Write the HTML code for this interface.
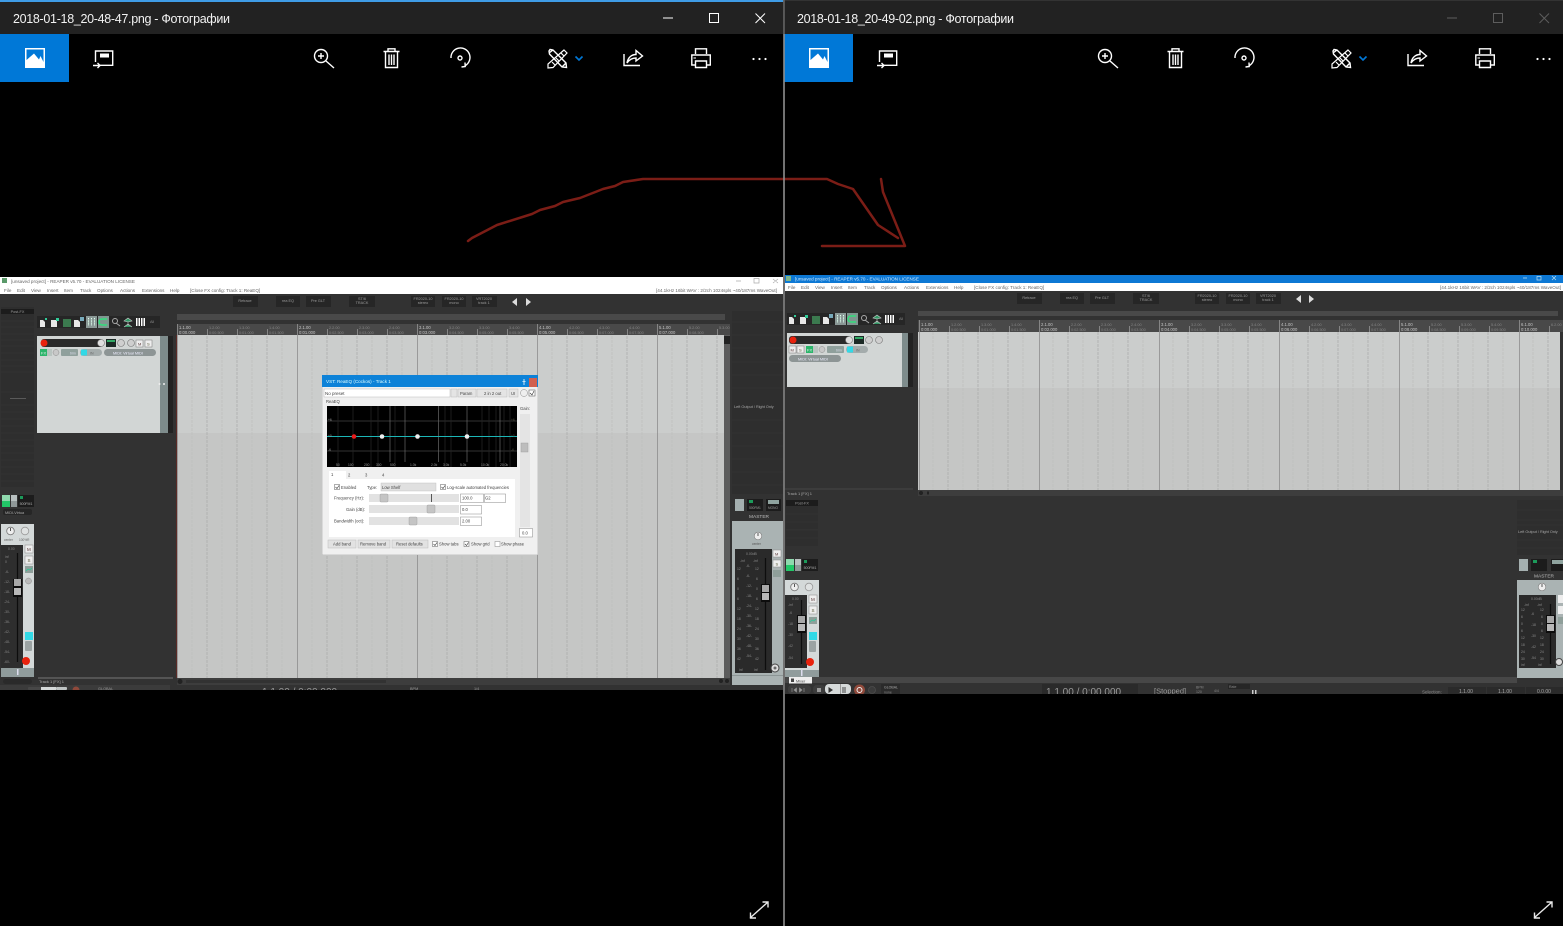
<!DOCTYPE html>
<html><head><meta charset="utf-8"><title>Фотографии</title>
<style>
html,body{margin:0;padding:0;background:#000;overflow:hidden}
svg{display:block;position:absolute;left:0;top:0}
text{font-family:"Liberation Sans","Noto Sans CJK SC",sans-serif}
</style></head>
<body>
<svg width="1563" height="926" viewBox="0 0 1563 926" xmlns="http://www.w3.org/2000/svg">
<defs>
<filter id="b" x="0" y="0" width="100%" height="100%"><feGaussianBlur stdDeviation="0.3"/></filter>
<pattern id="grid" x="177" y="0" width="120" height="4" patternUnits="userSpaceOnUse">
<path d="M15 0V4M45 0V4M75 0V4M105 0V4" stroke="#bdbfbe" stroke-width=".8" stroke-dasharray="3 1"/>
<path d="M30 0V4M60 0V4M90 0V4" stroke="#acadac" stroke-width=".8" stroke-dasharray="3 1"/>
<path d="M0.5 0V4" stroke="#949494" stroke-width=".9"/>
</pattern>
<pattern id="grid2" x="918" y="0" width="120" height="4" patternUnits="userSpaceOnUse">
<path d="M15 0V4M45 0V4M75 0V4M105 0V4" stroke="#bdbfbe" stroke-width=".8" stroke-dasharray="3 1"/>
<path d="M30 0V4M60 0V4M90 0V4" stroke="#acadac" stroke-width=".8" stroke-dasharray="3 1"/>
<path d="M1.5 0V4" stroke="#949494" stroke-width=".9"/>
</pattern>
<g id="toolbar" fill="none" stroke="#fff" stroke-width="1.400">
<rect x="0" y="34" width="69" height="48" fill="#0078d7" stroke="none"/>
<rect x="25" y="48" width="20" height="20" fill="#fff" stroke="none"/>
<path d="M26.500 49.500H43.500V62L40.500 56 39 59.500 34 53.500 26.500 60Z" fill="#0078d7" stroke="none"/>
<path d="M95.500 62V51H112.700V65.300H99.500"/>
<rect x="100" y="53.500" width="9" height="4" fill="#fff" stroke="none"/>
<path d="M93 65.500H100M97.500 63L100 65.500 97.500 68"/>
<circle cx="321" cy="56" r="6.500"/>
<path d="M318 56H324M321 53V59M326 61L334 68"/>
<path d="M383.500 51.500H399.500M388 51V48.800H395V51M385.500 52V67.500H397.500V52M389 54.500V65M391.500 54.500V65M394 54.500V65"/>
<path d="M451 58A9.500 9.500 0 1 1 465.500 65.500M465 62.500L465.200 66.500 461.500 67"/>
<circle cx="460" cy="58" r="2"/>
<path d="M550 49.500L553 50 566 63 566.500 67.500 562 67 549.500 54 549 51ZM549 53L553 50M562 67L566 63"/>
<path d="M564 50L567 53 553 67.500 548 68 548 64ZM561 53L564 56M556 58L559 61M552 62L555 65" stroke-width="1.200"/>
<path d="M575.500 56.500L579 60 582.500 56.500" stroke="#0078d7" stroke-width="1.600"/>
<path d="M624 54V65.500H640"/>
<path d="M627 63C628 57 632 54.500 636 54.500V50.500L642.500 56 636 61V58C632 58 629 60 627 63Z"/>
<path d="M695.500 54V48.800H706.500V54M695.500 65H691.800V55H710.300V65H706.500M695.500 61H706.500V67.500H695.500Z"/>
<path d="M693.500 58H696" stroke-width="1"/>
<circle cx="753.500" cy="59" r="1.100" fill="#fff" stroke="none"/>
<circle cx="759.500" cy="59" r="1.100" fill="#fff" stroke="none"/>
<circle cx="765.500" cy="59" r="1.100" fill="#fff" stroke="none"/>
<path d="M750 918L768 902M750.500 912.500V918H756M762.500 902H768V907.500" stroke="#e8e8e8"/>
</g>
</defs>
<rect width="1563" height="926" fill="#000"/>

<!-- Left window chrome -->
<rect x="0" y="0" width="784" height="34" fill="#222"/>
<rect x="0" y="0" width="784" height="2" fill="#3f9ce6"/>
<text x="13" y="23" font-size="12.500" fill="#f2f2f2" textLength="217" lengthAdjust="spacing">2018-01-18_20-48-47.png - Фотографии</text>
<path d="M663 18H673" stroke="#fff" fill="none"/>
<rect x="709.500" y="13.500" width="9" height="9" fill="none" stroke="#fff"/>
<path d="M755.500 13.500L765 23M765 13.500L755.500 23" stroke="#fff" fill="none"/>
<use href="#toolbar"/>

<!-- Right window chrome -->
<rect x="785" y="0" width="778" height="34" fill="#222"/>
<rect x="785" y="0" width="778" height="1" fill="#333"/>
<text x="797" y="23" font-size="12.500" fill="#f2f2f2" textLength="217" lengthAdjust="spacing">2018-01-18_20-49-02.png - Фотографии</text>
<path d="M1447 18H1457" stroke="#5d5d5d" fill="none"/>
<rect x="1493.500" y="13.500" width="9" height="9" fill="none" stroke="#5d5d5d"/>
<path d="M1539.500 13.500L1549 23M1549 13.500L1539.500 23" stroke="#5d5d5d" fill="none"/>
<use href="#toolbar" x="784"/>

<!-- Left Reaper -->
<g filter="url(#b)">
<rect x="0" y="277" width="783" height="413" fill="#333"/>
<rect x="0" y="277" width="783" height="17" fill="#fff"/>
<rect x="2" y="278" width="5" height="5" fill="#5a9a6a"/>
<g font-size="4.600" fill="#666">
<text x="11" y="283">[unsaved project] - REAPER v5.70 - EVALUATION LICENSE</text>
<text x="4" y="292">File</text><text x="17" y="292">Edit</text><text x="31" y="292">View</text><text x="47" y="292">Insert</text><text x="64" y="292">Item</text><text x="80" y="292">Track</text><text x="97" y="292">Options</text><text x="120" y="292">Actions</text><text x="142" y="292">Extensions</text><text x="170" y="292">Help</text>
<text x="190" y="292">[Close FX config: Track 1: ReaEQ]</text>
<text x="656" y="292">[44.1kHz 16bit WAV : 2/2ch 1024spls ~40/187ms WaveOut]</text>
</g>
<path d="M736 281H741M754 278.500H759V283H754ZM773 279L778 283M778 279L773 283" stroke="#aaa" fill="none" stroke-width=".7"/>

<g fill="#282828">
<rect x="233" y="296" width="25" height="11"/><rect x="276" y="296" width="24" height="11"/><rect x="306" y="296" width="25" height="11"/><rect x="349" y="296" width="26" height="11"/><rect x="411" y="296" width="24" height="11"/><rect x="442" y="296" width="24" height="11"/><rect x="472" y="296" width="25" height="11"/>
</g>
<g font-size="3.800" fill="#999" text-anchor="middle">
<text x="245" y="302">Retrace</text><text x="288" y="302">rea EQ</text><text x="318" y="302">Pre GLT</text><text x="362" y="300">ST/6</text><text x="362" y="304">TRACK</text><text x="423" y="300">FR2020-10</text><text x="423" y="304">stereo</text><text x="454" y="300">FR2020-10</text><text x="454" y="304">mono</text><text x="484" y="300">VRT2020</text><text x="484" y="304">track 1</text>
</g>
<path d="M517 298L512 302 517 306ZM526 298L531 302 526 306Z" fill="#ddd"/>

<!-- left FX column -->
<rect x="1" y="307" width="33" height="180" fill="#2d2d2d"/>
<rect x="1" y="309" width="33" height="5" fill="#1f1f1f"/>
<text x="17.500" y="313" font-size="3.800" fill="#999" text-anchor="middle">Post-FX</text>
<path d="M1 321H34M1 327H34M1 334H34M1 340H34M1 346H34M1 353H34M1 360H34M1 366H34M1 372H34M1 392H34M1 405H34M1 412H34M1 419H34M1 426H34M1 433H34M1 440H34M1 446H34M1 453H34M1 460H34M1 467H34M1 474H34M1 481H34" stroke="#313131" stroke-width="1"/>
<rect x="10" y="398" width="16" height="1" fill="#5a5a5a"/>
<rect x="2" y="495" width="8" height="6" fill="#8fd9ae"/><rect x="2" y="501" width="8" height="6" fill="#22c868"/>
<rect x="11" y="495" width="6" height="6" fill="#b8c0c0"/><rect x="11" y="501" width="6" height="6" fill="#8f9898"/>
<rect x="18" y="495" width="16" height="12" fill="#1f1f1f"/>
<rect x="20" y="496" width="3" height="3" fill="#1f9a5a"/>
<text x="26" y="505" font-size="3.500" fill="#aaa" text-anchor="middle">500FM1</text>
<rect x="3" y="509" width="29" height="6" rx="2" fill="#262626"/>
<text x="5" y="514" font-size="3.800" fill="#aaa">MIDI-Virtua</text>

<!-- left mixer strip -->
<rect x="1" y="524" width="33" height="144" fill="#d4d9d9"/>
<circle cx="10.500" cy="531" r="3.800" fill="#eee" stroke="#777" stroke-width=".8"/><path d="M10.500 528V531" stroke="#555"/>
<circle cx="25" cy="531" r="3.800" fill="#dfe2e2" stroke="#999" stroke-width=".8"/>
<text x="4" y="541" font-size="3.200" fill="#666">center</text><text x="19" y="541" font-size="3.200" fill="#666">100%R</text>
<rect x="1" y="545" width="22" height="123" fill="#2d2d2d"/>
<path d="M17.500 553V662" stroke="#0f0f0f" stroke-width="1.200"/>
<rect x="13" y="579" width="9" height="18" fill="#111"/>
<rect x="14" y="579" width="7" height="7" fill="#a8a8a8"/><rect x="14" y="588" width="7" height="7" fill="#b8b8b8"/>
<g font-size="3.400" fill="#888">
<text x="8" y="550">0.00</text><text x="5" y="558">inf</text><text x="5" y="563">0</text><text x="5" y="573">-6-</text><text x="4" y="583">-12-</text><text x="4" y="593">-18-</text><text x="4" y="603">-24-</text><text x="4" y="613">-30-</text><text x="4" y="623">-36-</text><text x="4" y="633">-42-</text><text x="4" y="643">-48-</text><text x="4" y="653">-54-</text><text x="4" y="663">-60-</text>
</g>
<rect x="25" y="545" width="8" height="8" fill="#eee" stroke="#888" stroke-width=".5"/><text x="27" y="551" font-size="4.500" fill="#533">M</text>
<rect x="25" y="556" width="8" height="8" fill="#eee" stroke="#888" stroke-width=".5"/><text x="27.500" y="562" font-size="4.500" fill="#553">S</text>
<rect x="25" y="566" width="8" height="7" fill="#8f9f9a"/><path d="M26 571L28 569 30 570 32 568" stroke="#2c9" fill="none" stroke-width=".7"/>
<circle cx="28.500" cy="581" r="3" fill="#bbb" stroke="#888" stroke-width=".5"/>
<rect x="25" y="632" width="8" height="8" fill="#33d9e6"/>
<rect x="25" y="641" width="7" height="10" rx="1" fill="#9ba3a3"/>
<circle cx="26" cy="661" r="4" fill="#e8200c"/>
<rect x="1" y="668" width="33" height="9" fill="#909c9c"/>
<rect x="17" y="669" width="1.500" height="6" fill="#dde"/>
<rect x="3" y="679" width="29" height="5" rx="2.500" fill="#2a2a2a"/>
<rect x="0" y="685" width="170" height="5" fill="#3a3a3a"/>
<rect x="38" y="677.500" width="135" height="1" fill="#777"/>
<text x="39" y="683" font-size="4" fill="#aaa">Track 1 [FX] 1</text>
<rect x="28" y="687" width="39" height="3" rx="1" fill="#474747"/>
<rect x="41" y="687" width="15" height="3" fill="#d5d9d9"/><rect x="56" y="687" width="11" height="3" rx="1" fill="#bfc4c4"/>
<circle cx="76" cy="690" r="3.500" fill="#8f4a3a"/>
<text x="98" y="690" font-size="3.800" fill="#999">GLOBAL</text>
<text x="262" y="695" font-size="10" fill="#999">1.1.00 / 0:00.000</text>
<text x="410" y="690" font-size="3.800" fill="#999">BPM</text><text x="474" y="690" font-size="3.800" fill="#999">1/4</text>

<!-- left toolbar -->
<rect x="37" y="316" width="123" height="12" fill="#262626"/>
<g fill="#e8e8e8">
<path d="M40 320H43L45 322V327H40Z"/><path d="M51 320H57V327H51Z"/><rect x="63" y="319" width="8" height="8" fill="#3a7a4f"/><path d="M74 320H78L80 322V327H74Z"/>
</g>
<rect x="45" y="318" width="2" height="2" fill="#3c9"/><rect x="56" y="318" width="3" height="3" fill="#3c9"/><rect x="80" y="317" width="4" height="4" fill="#7ab"/>
<rect x="86" y="316" width="11" height="12" fill="#8a9896"/><path d="M88.500 318V326M91.500 318V326M94.500 318V326" stroke="#dfe" stroke-dasharray="1 .6"/>
<rect x="98" y="316" width="11" height="12" fill="#7f9690"/><path d="M107 319H102A3 3 0 0 0 102 325H107" stroke="#2e7" fill="none" stroke-width="1.200"/>
<circle cx="115" cy="321" r="2.500" fill="none" stroke="#aaa"/><path d="M116 323L120 326" stroke="#aaa"/>
<path d="M124 321L128 318 132 321 128 322ZM128 322V326M124 327L128 324 132 327" stroke="#ccc" fill="#396" stroke-width=".6"/>
<rect x="136" y="318" width="9" height="8" fill="#fff"/><path d="M138 318V326M140.500 318V326M143 318V326" stroke="#222"/>
<text x="150" y="323" font-size="3.800" fill="#888">All</text>

<!-- left TCP -->
<rect x="37" y="336" width="123" height="97" fill="#d2d6d5"/>
<rect x="160" y="336" width="8" height="97" fill="#7e8c8c"/>
<rect x="168" y="336" width="5" height="97" fill="#232323"/>
<circle cx="159.500" cy="384" r="1" fill="#eee"/><circle cx="164" cy="384" r="1" fill="#eee"/>
<rect x="41" y="339" width="62" height="8" rx="3" fill="#2a2a2a"/>
<circle cx="44" cy="343" r="3.500" fill="#e8200c"/>
<circle cx="101" cy="343" r="3.500" fill="#dfdfdf" stroke="#777" stroke-width=".6"/>
<rect x="106" y="339" width="10" height="8" fill="#1f2a28"/><rect x="107" y="340" width="8" height="2" fill="#3a6"/>
<circle cx="121" cy="343" r="3.500" fill="#cfcfcf" stroke="#777" stroke-width=".6"/><circle cx="131" cy="343" r="3.500" fill="#cfcfcf" stroke="#777" stroke-width=".6"/>
<rect x="136" y="340" width="7" height="7" fill="#eee" stroke="#777" stroke-width=".5"/><rect x="145" y="340" width="7" height="7" fill="#eee" stroke="#777" stroke-width=".5"/>
<text x="138" y="345.500" font-size="4" fill="#533">M</text><text x="147" y="345.500" font-size="4" fill="#553">S</text>
<rect x="40" y="349" width="11" height="7" fill="#2bb56a"/><rect x="47" y="349" width="5" height="7" fill="#b9c4c0"/>
<text x="41" y="354.500" font-size="4" fill="#eee">FX</text>
<circle cx="56" cy="352.500" r="3" fill="#c8c8c8" stroke="#888" stroke-width=".5"/>
<rect x="61" y="349" width="17" height="7" rx="1" fill="#8fa09c"/>
<text x="70" y="354.500" font-size="3.500" fill="#dde">trim</text>
<rect x="80" y="349" width="22" height="7" rx="3.500" fill="#a4acac"/><rect x="81" y="349.500" width="6" height="6" fill="#33d9e6"/>
<text x="90" y="354.500" font-size="3.500" fill="#666">IN</text>
<rect x="104" y="349" width="52" height="7" rx="3.500" fill="#8d9595"/>
<text x="113" y="354.500" font-size="3.800" fill="#eef">MIDI: Virtual MIDI</text>

<!-- left ruler/arrange -->
<rect x="177" y="314" width="548" height="6" fill="#4a4a4a"/>
<rect x="177" y="324" width="553" height="11" fill="#4a4a4a"/>
<rect x="177" y="335" width="547" height="98" fill="#cbcdcc"/>
<rect x="177" y="433" width="547" height="245" fill="#c5c6c5"/>
<rect x="177" y="335" width="547" height="343" fill="url(#grid)"/>
<rect x="176" y="335" width="1" height="343" fill="#5a2a26"/>
<rect x="724" y="335" width="6" height="343" fill="#5b5b5b"/>
<rect x="724" y="336" width="6" height="8" fill="#222"/>
<rect x="177" y="678" width="553" height="7" fill="#3c3c3c"/>
<rect x="186" y="680" width="200" height="3" fill="#303030"/>
<circle cx="180" cy="681.500" r="2.500" fill="#222"/>
<circle cx="727" cy="681" r="2" fill="#222"/><circle cx="721" cy="681" r="2" fill="#222"/>
<g stroke="#858585" stroke-width="1">
<path d="M177.500 324V335M207.500 329V335M237.500 329V335M267.500 329V335M297.500 324V335M327.500 329V335M357.500 329V335M387.500 329V335M417.500 324V335M447.500 329V335M477.500 329V335M507.500 329V335M537.500 324V335M567.500 329V335M597.500 329V335M627.500 329V335M657.500 324V335M687.500 329V335M717.500 329V335"/>
</g>
<g font-size="4.200" fill="#c4c4c4">
<text x="179" y="329">1.1.00</text><text x="299" y="329">2.1.00</text><text x="419" y="329">3.1.00</text><text x="539" y="329">4.1.00</text><text x="659" y="329">5.1.00</text>
<text x="179" y="334">0:00.000</text><text x="299" y="334">0:01.000</text><text x="419" y="334">0:03.000</text><text x="539" y="334">0:05.000</text><text x="659" y="334">0:07.000</text>
</g>
<g font-size="3.800" fill="#858585">
<text x="209" y="329">1.2.00</text><text x="239" y="329">1.3.00</text><text x="269" y="329">1.4.00</text><text x="329" y="329">2.2.00</text><text x="359" y="329">2.3.00</text><text x="389" y="329">2.4.00</text><text x="449" y="329">3.2.00</text><text x="479" y="329">3.3.00</text><text x="509" y="329">3.4.00</text><text x="569" y="329">4.2.00</text><text x="599" y="329">4.3.00</text><text x="629" y="329">4.4.00</text><text x="689" y="329">5.2.00</text><text x="719" y="329">5.3.00</text>
<text x="209" y="334">0:00.500</text><text x="239" y="334">0:01.000</text><text x="269" y="334">0:01.500</text><text x="329" y="334">0:02.500</text><text x="359" y="334">0:03.000</text><text x="389" y="334">0:03.500</text><text x="449" y="334">0:04.500</text><text x="479" y="334">0:05.000</text><text x="509" y="334">0:05.500</text><text x="569" y="334">0:06.500</text><text x="599" y="334">0:07.000</text><text x="629" y="334">0:07.500</text><text x="689" y="334">0:08.500</text>
</g>

<!-- left master column -->
<rect x="732" y="311" width="51" height="183" fill="#2d2d2d"/>
<path d="M732 322H783M732 335H783M732 348H783M732 362H783M732 375H783M732 388H783M732 420H783M732 433H783M732 446H783M732 459H783M732 472H783M732 485H783" stroke="#323232"/>
<text x="734" y="408" font-size="3.800" fill="#aaa">Left Output / Right Only</text>
<rect x="735" y="499" width="9" height="12" fill="#a5b0b0"/><rect x="747" y="499" width="16" height="12" fill="#1f1f1f"/><rect x="749" y="500" width="4" height="3" fill="#1f9a5a"/>
<rect x="766" y="499" width="15" height="12" fill="#1f1f1f"/><rect x="768" y="500" width="11" height="4" fill="#8fa39f"/>
<text x="755" y="509" font-size="3.200" fill="#999" text-anchor="middle">500FM1</text><text x="773" y="509" font-size="3.200" fill="#999" text-anchor="middle">MONO</text>
<text x="749" y="518" font-size="4.800" fill="#bbb">MASTER</text>
<rect x="732" y="521" width="51" height="164" fill="#aab3b3"/>
<circle cx="758" cy="536" r="3.800" fill="#eee" stroke="#777" stroke-width=".6"/><path d="M758 533V536" stroke="#555"/>
<text x="752" y="545" font-size="3.200" fill="#555">center</text>
<rect x="735" y="549" width="37" height="124" fill="#2b2b2b"/>
<path d="M765.500 558V670" stroke="#0f0f0f" stroke-width="1.200"/>
<rect x="761" y="584" width="9" height="18" fill="#111"/><rect x="762" y="585" width="7" height="7" fill="#a8a8a8"/><rect x="762" y="593" width="7" height="7" fill="#b8b8b8"/>
<g font-size="3.400" fill="#8a8a8a">
<text x="746" y="555">0.00dB</text><text x="740" y="562">-inf</text><text x="753" y="562">-inf</text>
<text x="737" y="570">12</text><text x="737" y="580">6</text><text x="737" y="590">0</text><text x="737" y="600">6</text><text x="737" y="610">12</text><text x="737" y="620">18</text><text x="737" y="630">24</text><text x="737" y="640">30</text><text x="737" y="650">36</text><text x="737" y="660">42</text><text x="739" y="671">inf</text>
<text x="746" y="567">-6-</text><text x="746" y="577">-6-</text><text x="746" y="587">-12-</text><text x="746" y="597">-18-</text><text x="746" y="607">-24-</text><text x="746" y="617">-30-</text><text x="746" y="627">-36-</text><text x="746" y="637">-42-</text><text x="746" y="647">-48-</text><text x="746" y="657">-54-</text>
<text x="755" y="570">12</text><text x="756" y="580">6</text><text x="756" y="590">0</text><text x="756" y="600">6</text><text x="755" y="610">12</text><text x="755" y="620">18</text><text x="755" y="630">24</text><text x="755" y="640">30</text><text x="755" y="650">36</text><text x="755" y="660">42</text><text x="754" y="671">inf</text>
</g>
<rect x="773" y="550" width="8" height="7" fill="#eee" stroke="#888" stroke-width=".5"/><text x="775" y="555.500" font-size="4" fill="#533">M</text>
<rect x="773" y="560" width="8" height="7" fill="#eee" stroke="#888" stroke-width=".5"/><text x="775.500" y="565.500" font-size="4" fill="#553">S</text>
<rect x="773" y="570" width="8" height="7" fill="#8f9f9a"/>
<circle cx="775" cy="668" r="4" fill="#ddd" stroke="#444"/><circle cx="775" cy="668" r="1.500" fill="#666"/>
<rect x="732" y="675" width="51" height="1" fill="#8d9696"/>
</g>
<rect x="0" y="690" width="783" height="10" fill="#000"/>

<!-- FX window -->
<g filter="url(#b)">
<rect x="322" y="375" width="216" height="180" fill="#f0f0f0"/>
<rect x="322" y="375" width="216" height="180" fill="none" stroke="#999" stroke-width=".5"/>
<rect x="322" y="375" width="216" height="12" fill="#0f82d8"/>
<text x="326" y="383" font-size="4.600" fill="#dff">VST: ReaEQ (Cockos) - Track 1</text>
<path d="M524 379V381M522.500 381.500H525.500M524 382V385" stroke="#fff" stroke-width=".8"/>
<rect x="529" y="378" width="8" height="9" fill="#d2604f"/>
<rect x="324" y="389" width="126" height="8" fill="#fff" stroke="#bbb" stroke-width=".5"/>
<text x="325" y="395" font-size="4.500" fill="#444">No preset</text>
<g fill="#e4e4e4" stroke="#bbb" stroke-width=".5">
<rect x="451" y="389" width="6" height="8"/><rect x="458" y="389" width="18" height="8"/><rect x="477" y="389" width="30" height="8"/><rect x="509" y="389" width="9" height="8"/>
</g>
<g font-size="4.200" fill="#444">
<text x="460" y="395">Param</text><text x="484" y="395">2 in 2 out</text><text x="511" y="395">UI</text>
<text x="326" y="403">ReaEQ</text><text x="520" y="410">Gain:</text>
</g>
<circle cx="524" cy="393" r="3.500" fill="#eee" stroke="#888" stroke-width=".5"/>
<rect x="529" y="390" width="6" height="6" fill="#fff" stroke="#666" stroke-width=".6"/><path d="M530 393L532 395 534 391" stroke="#333" stroke-width=".6" fill="none"/>
<rect x="327" y="406" width="190" height="61" fill="#000"/>
<path d="M327 421H517M327 451H517" stroke="#404040" stroke-width=".7"/>
<path d="M338 406V467M353 406V467M371 406V467M378 406V467M395 406V467M445 406V467M451 406V467M482 406V467M489 406V467M496 406V467M504 406V467M510 406V467" stroke="#262626" stroke-width=".7"/>
<path d="M390 406V462M405 406V462M438.500 406V462M467 406V462M500 406V462" stroke="#6a6a6a" stroke-width=".7"/>
<path d="M327 436.500H517" stroke="#1fb6b6" stroke-width="1"/>
<circle cx="354" cy="436.500" r="2.300" fill="#e81c1c"/>
<circle cx="382" cy="436.500" r="2.300" fill="#eee"/>
<circle cx="417.500" cy="436.500" r="2.300" fill="#eee"/>
<circle cx="467" cy="436.500" r="2.300" fill="#eee"/>
<g font-size="3.300" fill="#999">
<text x="336" y="466">50</text><text x="348" y="466">100</text><text x="364" y="466">200</text><text x="376" y="466">300</text><text x="390" y="466">500</text><text x="410" y="466">1.0k</text><text x="431" y="466">2.0k</text><text x="443" y="466">3.0k</text><text x="460" y="466">5.0k</text><text x="481" y="466">10.0k</text><text x="500" y="466">20.0k</text>
<text x="328" y="421">+6</text><text x="328" y="437">+0</text><text x="328" y="451">-6</text>
<text x="511" y="421" fill="#554">+6</text><text x="511" y="437" fill="#554">+0</text><text x="511" y="451" fill="#554">-6</text>
</g>
<rect x="329" y="471" width="17" height="8" fill="#fff"/>
<rect x="329" y="479" width="186" height="58" fill="#fff"/>
<rect x="381" y="483" width="55" height="8" fill="#e0e0e0" stroke="#bbb" stroke-width=".4"/>
<g fill="#fff" stroke="#777" stroke-width=".6">
<rect x="334.500" y="484.500" width="5" height="5"/><rect x="440.500" y="484.500" width="5" height="5"/><rect x="432.500" y="541.500" width="5" height="5"/><rect x="464" y="541.500" width="5" height="5"/><rect x="495" y="541.500" width="5" height="5" stroke="#999"/>
</g>
<path d="M335.500 487L337 488.500 339 485.500M441.500 487L443 488.500 445 485.500M433.500 544L435 545.500 437 542.500M465 544L466.500 545.500 468.500 542.500" stroke="#333" stroke-width=".6" fill="none"/>
<g fill="#e2e2e2">
<rect x="369" y="494" width="90" height="8"/><rect x="369" y="505" width="90" height="8"/><rect x="369" y="517" width="90" height="8"/>
</g>
<path d="M431.500 494V502" stroke="#333" stroke-width=".8"/>
<g fill="#c4c4c4" stroke="#999" stroke-width=".4">
<rect x="380" y="494" width="8" height="8" rx="1"/><rect x="427" y="505" width="8" height="8" rx="1"/><rect x="409" y="517" width="8" height="8" rx="1"/>
</g>
<g fill="#fff" stroke="#888" stroke-width=".5">
<rect x="460.500" y="494" width="23" height="8.500"/><rect x="484.500" y="494" width="21" height="8.500"/><rect x="460.500" y="505.500" width="21" height="8.500"/><rect x="460.500" y="517" width="21" height="8.500"/><rect x="519.500" y="528.500" width="13" height="8.500"/>
</g>
<rect x="520" y="414" width="10" height="113" fill="#e4e4e4"/>
<rect x="521" y="443" width="7" height="9" fill="#bdbdbd" stroke="#999" stroke-width=".4"/>
<g fill="#e2e2e2" stroke="#bbb" stroke-width=".5">
<rect x="328" y="540" width="28" height="8"/><rect x="358" y="540" width="32" height="8"/><rect x="392" y="540" width="36" height="8"/>
</g>
<g font-size="4.200" fill="#444">
<text x="331" y="476">1</text><text x="348" y="476.500">2</text><text x="365" y="476.500">3</text><text x="382" y="476.500">4</text>
<text x="341" y="489">Enabled</text><text x="367" y="489">Type:</text><text x="382" y="489">Low Shelf</text>
<text x="447" y="489">Log-scale automated frequencies</text>
<text x="334" y="499.500">Frequency (Hz):</text><text x="346" y="511">Gain (dB):</text><text x="334" y="522.500">Bandwidth (oct):</text>
<text x="462" y="499.500">100.0</text><text x="485" y="499.500">G2</text><text x="462" y="511">0.0</text><text x="462" y="522.500">2.00</text>
<text x="522" y="534.500">0.0</text>
<text x="333" y="545.500">Add band</text><text x="360" y="545.500">Remove band</text><text x="396" y="545.500">Reset defaults</text>
<text x="439" y="545.500">Show tabs</text><text x="471" y="545.500">Show grid</text><text x="501" y="545.500">Show phase</text>
</g>
</g>

<!-- Red drawn arrow -->
<path d="M468 241L472 238 497 225 532 214 540 210 555 206 563 202 580 198 603 189 615 186 623 182 643 179H827L838 184 853 189 878 225 898 238M881 179L883 192 905 246H822" fill="none" stroke="#7b1d16" stroke-width="2.500" stroke-linejoin="round" stroke-linecap="round"/>

<!-- Right Reaper -->
<g filter="url(#b)">
<rect x="785" y="275" width="778" height="419" fill="#333"/>
<rect x="785" y="275" width="778" height="8" fill="#0a78d4"/>
<rect x="785" y="283" width="778" height="8" fill="#fff"/>
<rect x="786" y="276" width="5" height="5" fill="#7fb58a"/>
<text x="795" y="280.500" font-size="4.600" fill="#cfe8ff">[unsaved project] - REAPER v5.70 - EVALUATION LICENSE</text>
<path d="M1523 278H1527M1537 276.500H1541V280H1537ZM1552 276L1556 280M1556 276L1552 280" stroke="#bde" fill="none" stroke-width=".7"/>
<g font-size="4.600" fill="#666">
<text x="788" y="289">File</text><text x="801" y="289">Edit</text><text x="815" y="289">View</text><text x="831" y="289">Insert</text><text x="848" y="289">Item</text><text x="864" y="289">Track</text><text x="881" y="289">Options</text><text x="904" y="289">Actions</text><text x="926" y="289">Extensions</text><text x="954" y="289">Help</text>
<text x="974" y="289">[Close FX config: Track 1: ReaEQ]</text>
<text x="1440" y="289">[44.1kHz 16bit WAV : 2/2ch 1024spls ~40/187ms WaveOut]</text>
</g>
<g fill="#282828">
<rect x="1017" y="293" width="25" height="11"/><rect x="1060" y="293" width="24" height="11"/><rect x="1090" y="293" width="25" height="11"/><rect x="1133" y="293" width="26" height="11"/><rect x="1195" y="293" width="24" height="11"/><rect x="1226" y="293" width="24" height="11"/><rect x="1256" y="293" width="25" height="11"/>
</g>
<g font-size="3.800" fill="#999" text-anchor="middle">
<text x="1029" y="299">Retrace</text><text x="1072" y="299">rea EQ</text><text x="1102" y="299">Pre GLT</text><text x="1146" y="297">ST/6</text><text x="1146" y="301">TRACK</text><text x="1207" y="297">FR2020-10</text><text x="1207" y="301">stereo</text><text x="1238" y="297">FR2020-10</text><text x="1238" y="301">mono</text><text x="1268" y="297">VRT2020</text><text x="1268" y="301">track 1</text>
</g>
<path d="M1301 295L1296 299 1301 303ZM1309 295L1314 299 1309 303Z" fill="#ddd"/>

<rect x="787" y="313" width="118" height="12" fill="#262626"/>
<g fill="#e8e8e8">
<path d="M789 317H792L794 319V324H789Z"/><path d="M800 317H806V324H800Z"/><rect x="812" y="316" width="8" height="8" fill="#3a7a4f"/><path d="M823 317H827L829 319V324H823Z"/>
</g>
<rect x="794" y="315" width="2" height="2" fill="#3c9"/><rect x="805" y="315" width="3" height="3" fill="#3c9"/><rect x="829" y="314" width="4" height="4" fill="#7ab"/>
<rect x="835" y="313" width="11" height="12" fill="#8a9896"/><path d="M837.500 315V323M840.500 315V323M843.500 315V323" stroke="#dfe" stroke-dasharray="1 .6"/>
<rect x="847" y="313" width="11" height="12" fill="#7f9690"/><path d="M856 316H851A3 3 0 0 0 851 322H856" stroke="#2e7" fill="none" stroke-width="1.200"/>
<circle cx="864" cy="318" r="2.500" fill="none" stroke="#aaa"/><path d="M865 320L869 323" stroke="#aaa"/>
<path d="M873 318L877 315 881 318 877 319ZM877 319V323M873 324L877 321 881 324" stroke="#ccc" fill="#396" stroke-width=".6"/>
<rect x="885" y="315" width="9" height="8" fill="#fff"/><path d="M887 315V323M889.500 315V323M892 315V323" stroke="#222"/>
<text x="899" y="320" font-size="3.800" fill="#888">All</text>

<rect x="787" y="333" width="115" height="54" fill="#d2d6d5"/>
<rect x="902" y="333" width="6" height="54" fill="#7e8c8c"/>
<rect x="908" y="333" width="5" height="54" fill="#232323"/>
<rect x="789" y="336" width="62" height="8" rx="3" fill="#2a2a2a"/>
<circle cx="793" cy="340" r="3.500" fill="#e8200c"/>
<circle cx="849" cy="340" r="3.500" fill="#dfdfdf" stroke="#777" stroke-width=".6"/>
<rect x="854" y="336" width="10" height="8" fill="#1f2a28"/><rect x="855" y="337" width="8" height="2" fill="#3a6"/>
<circle cx="869" cy="340" r="3.500" fill="#cfcfcf" stroke="#777" stroke-width=".6"/><circle cx="879" cy="340" r="3.500" fill="#cfcfcf" stroke="#777" stroke-width=".6"/>
<rect x="789" y="346" width="7" height="7" fill="#eee" stroke="#777" stroke-width=".5"/><rect x="797" y="346" width="7" height="7" fill="#eee" stroke="#777" stroke-width=".5"/>
<text x="790.500" y="351.500" font-size="4" fill="#533">M</text><text x="799" y="351.500" font-size="4" fill="#553">S</text>
<rect x="806" y="346" width="11" height="7" fill="#2bb56a"/><rect x="813" y="346" width="5" height="7" fill="#b9c4c0"/>
<text x="807" y="351.500" font-size="4" fill="#eee">FX</text>
<circle cx="822" cy="349.500" r="3" fill="#c8c8c8" stroke="#888" stroke-width=".5"/>
<rect x="827" y="346" width="17" height="7" rx="1" fill="#8fa09c"/>
<text x="836" y="351.500" font-size="3.500" fill="#dde">trim</text>
<rect x="846" y="346" width="22" height="7" rx="3.500" fill="#a4acac"/><rect x="847" y="346.500" width="6" height="6" fill="#33d9e6"/>
<text x="856" y="351.500" font-size="3.500" fill="#666">IN</text>
<rect x="789" y="355" width="52" height="7" rx="3.500" fill="#8d9595"/>
<text x="798" y="360.500" font-size="3.800" fill="#eef">MIDI: Virtual MIDI</text>

<rect x="918" y="311" width="640" height="5" fill="#4a4a4a"/>
<rect x="918" y="320" width="645" height="12" fill="#4a4a4a"/>
<rect x="918" y="332" width="642" height="56" fill="#cbcdcc"/>
<rect x="918" y="388" width="642" height="102" fill="#c5c6c5"/>
<rect x="918" y="332" width="642" height="158" fill="url(#grid2)"/>
<rect x="1560" y="332" width="3" height="158" fill="#333"/>
<rect x="918" y="490" width="645" height="6" fill="#3e3e3e"/>
<circle cx="921" cy="493" r="2" fill="#222"/><rect x="927" y="491.500" width="2" height="3" fill="#222"/>
<rect x="785" y="488.500" width="128" height="1" fill="#444"/>
<path d="M919.500 320V332M949.500 326V332M979.500 326V332M1009.500 326V332M1039.500 320V332M1069.500 326V332M1099.500 326V332M1129.500 326V332M1159.500 320V332M1189.500 326V332M1219.500 326V332M1249.500 326V332M1279.500 320V332M1309.500 326V332M1339.500 326V332M1369.500 326V332M1399.500 320V332M1429.500 326V332M1459.500 326V332M1489.500 326V332M1519.500 320V332M1549.500 326V332" stroke="#858585"/>
<g font-size="4.200" fill="#c4c4c4">
<text x="921" y="326">1.1.00</text><text x="1041" y="326">2.1.00</text><text x="1161" y="326">3.1.00</text><text x="1281" y="326">4.1.00</text><text x="1401" y="326">5.1.00</text><text x="1521" y="326">6.1.00</text>
<text x="921" y="331">0:00.000</text><text x="1041" y="331">0:02.000</text><text x="1161" y="331">0:04.000</text><text x="1281" y="331">0:06.000</text><text x="1401" y="331">0:08.000</text><text x="1521" y="331">0:10.000</text>
</g>
<g font-size="3.800" fill="#858585">
<text x="951" y="326">1.2.00</text><text x="981" y="326">1.3.00</text><text x="1011" y="326">1.4.00</text><text x="1071" y="326">2.2.00</text><text x="1101" y="326">2.3.00</text><text x="1131" y="326">2.4.00</text><text x="1191" y="326">3.2.00</text><text x="1221" y="326">3.3.00</text><text x="1251" y="326">3.4.00</text><text x="1311" y="326">4.2.00</text><text x="1341" y="326">4.3.00</text><text x="1371" y="326">4.4.00</text><text x="1431" y="326">5.2.00</text><text x="1461" y="326">5.3.00</text><text x="1491" y="326">5.4.00</text><text x="1551" y="326">6.2.00</text>
<text x="951" y="331">0:00.500</text><text x="981" y="331">0:01.000</text><text x="1011" y="331">0:01.500</text><text x="1071" y="331">0:02.500</text><text x="1101" y="331">0:03.000</text><text x="1131" y="331">0:03.500</text><text x="1191" y="331">0:04.500</text><text x="1221" y="331">0:05.000</text><text x="1251" y="331">0:05.500</text><text x="1311" y="331">0:06.500</text><text x="1341" y="331">0:07.000</text><text x="1371" y="331">0:07.500</text><text x="1431" y="331">0:08.500</text><text x="1461" y="331">0:09.000</text><text x="1491" y="331">0:09.500</text>
</g>

<!-- right window lower left column -->
<text x="787" y="495" font-size="4" fill="#aaa">Track 1 [FX] 1</text>
<rect x="786" y="500" width="32" height="46" fill="#2d2d2d"/>
<rect x="786" y="500" width="32" height="6" fill="#1f1f1f"/>
<text x="802" y="504.500" font-size="3.800" fill="#999" text-anchor="middle">Post-FX</text>
<path d="M786 514H818M786 522H818M786 538H818" stroke="#323232"/>
<rect x="785" y="529" width="33" height="1.500" fill="#333"/>
<rect x="786" y="559" width="8" height="6" fill="#8fd9ae"/><rect x="786" y="565" width="8" height="6" fill="#22c868"/>
<rect x="795" y="559" width="6" height="6" fill="#b8c0c0"/><rect x="795" y="565" width="6" height="6" fill="#8f9898"/>
<rect x="802" y="559" width="16" height="12" fill="#1f1f1f"/><rect x="804" y="560" width="3" height="3" fill="#1f9a5a"/>
<text x="810" y="569" font-size="3.500" fill="#aaa" text-anchor="middle">500FM1</text>

<rect x="785" y="580" width="34" height="90" fill="#d4d9d9"/>
<circle cx="794.500" cy="587" r="3.800" fill="#eee" stroke="#777" stroke-width=".8"/><path d="M794.500 584V587" stroke="#555"/>
<circle cx="809" cy="587" r="3.800" fill="#dfe2e2" stroke="#999" stroke-width=".8"/>
<rect x="785" y="595" width="22" height="73" fill="#2d2d2d"/>
<path d="M801.500 600V664" stroke="#0f0f0f" stroke-width="1.200"/>
<rect x="797" y="615" width="9" height="18" fill="#111"/><rect x="798" y="616" width="7" height="7" fill="#a8a8a8"/><rect x="798" y="624" width="7" height="7" fill="#b8b8b8"/>
<g font-size="3.400" fill="#888">
<text x="792" y="600">0.00</text><text x="788" y="606">-inf</text><text x="789" y="614">-6</text><text x="788" y="625">-18</text><text x="788" y="636">-30</text><text x="788" y="647">-42</text><text x="788" y="659">-54</text>
</g>
<rect x="809" y="595" width="8" height="8" fill="#eee" stroke="#888" stroke-width=".5"/><text x="811" y="601" font-size="4.500" fill="#533">M</text>
<rect x="809" y="606" width="8" height="8" fill="#eee" stroke="#888" stroke-width=".5"/><text x="811.500" y="612" font-size="4.500" fill="#553">S</text>
<rect x="809" y="617" width="8" height="7" fill="#8f9f9a"/><path d="M810 622L812 620 814 621 816 619" stroke="#2c9" fill="none" stroke-width=".7"/>
<rect x="809" y="632" width="8" height="8" fill="#33d9e6"/>
<rect x="809" y="641" width="7" height="11" rx="1" fill="#9ba3a3"/>
<circle cx="810" cy="662" r="4" fill="#e8200c"/>
<rect x="785" y="670" width="34" height="8" fill="#909c9c"/>
<rect x="801" y="670" width="1.500" height="6" fill="#dde"/>

<!-- right master -->
<rect x="1517" y="500" width="46" height="55" fill="#2d2d2d"/>
<path d="M1517 510H1563M1517 520H1563M1517 525H1563M1517 540H1563M1517 548H1563" stroke="#323232"/>
<text x="1518" y="533" font-size="3.800" fill="#aaa">Left Output / Right Only</text>
<rect x="1519" y="559" width="9" height="12" fill="#a5b0b0"/><rect x="1531" y="559" width="16" height="12" fill="#1f1f1f"/><rect x="1533" y="560" width="4" height="3" fill="#1f9a5a"/>
<rect x="1551" y="559" width="12" height="12" fill="#1f1f1f"/><rect x="1552" y="560" width="11" height="4" fill="#8fa39f"/>
<text x="1534" y="577.500" font-size="4.800" fill="#bbb">MASTER</text>
<rect x="1517" y="580" width="46" height="98" fill="#aab3b3"/>
<circle cx="1542" cy="587" r="3.800" fill="#eee" stroke="#777" stroke-width=".6"/><path d="M1542 584V587" stroke="#555"/>
<rect x="1519" y="595" width="37" height="73" fill="#2b2b2b"/>
<path d="M1550.500 604V664" stroke="#0f0f0f" stroke-width="1.200"/>
<rect x="1546" y="615" width="9" height="18" fill="#111"/><rect x="1547" y="616" width="7" height="7" fill="#a8a8a8"/><rect x="1547" y="624" width="7" height="7" fill="#b8b8b8"/>
<g font-size="3.400" fill="#8a8a8a">
<text x="1531" y="600">0.00dB</text><text x="1524" y="606">-inf</text><text x="1537" y="606">-inf</text>
<text x="1521" y="611">12</text><text x="1521" y="618">6</text><text x="1521" y="625">0</text><text x="1521" y="632">6</text><text x="1521" y="639">12</text><text x="1521" y="646">18</text><text x="1521" y="653">24</text><text x="1521" y="660">30</text><text x="1521" y="666">inf</text>
<text x="1531" y="615">-6</text><text x="1531" y="626">-18</text><text x="1531" y="637">-30</text><text x="1531" y="648">-42</text><text x="1531" y="659">-54</text>
<text x="1540" y="611">12</text><text x="1541" y="618">6</text><text x="1541" y="625">0</text><text x="1541" y="632">6</text><text x="1540" y="639">12</text><text x="1540" y="646">18</text><text x="1540" y="653">24</text><text x="1540" y="660">30</text><text x="1538" y="666">inf</text>
</g>
<rect x="1558" y="595" width="5" height="8" fill="#eee"/><rect x="1558" y="606" width="5" height="8" fill="#eee"/><rect x="1558" y="617" width="5" height="7" fill="#8f9f9a"/>
<circle cx="1559" cy="662" r="3.500" fill="#ddd" stroke="#444"/>

<!-- right bottom -->
<rect x="785" y="677" width="732" height="6" fill="#464646"/>
<rect x="789" y="677" width="23" height="6.500" fill="#eee"/>
<rect x="791" y="678.500" width="3" height="3.500" fill="#444"/>
<text x="796" y="682.500" font-size="3.800" fill="#444">Mixer</text>
<g fill="#3e3e3e">
<rect x="788" y="685" width="23" height="9" rx="4"/><rect x="813" y="685" width="12" height="9" rx="4"/>
</g>
<rect x="825" y="684" width="26" height="10" rx="4" fill="#d6dada"/>
<rect x="840" y="684" width="1" height="10" fill="#999"/>
<path d="M828.500 687V693L833 690Z" fill="#333"/><path d="M843 687V693M845 687V693" stroke="#444"/>
<path d="M792 688V692M794 690L796.500 688V692ZM804 688V692M802 690L799.500 688V692Z" fill="#999" stroke="#999" stroke-width=".6"/>
<rect x="817" y="688" width="4" height="4" fill="#999"/>
<circle cx="859.500" cy="690" r="5.500" fill="#8f4a3a"/><circle cx="859.500" cy="690" r="2.500" fill="none" stroke="#eee"/>
<circle cx="872" cy="690" r="3.500" fill="#3b3b3b" stroke="#555" stroke-width=".6"/>
<rect x="881" y="684" width="19" height="10" fill="#2b2b2b"/>
<text x="884" y="688.500" font-size="3.500" fill="#aaa">GLOBAL</text><text x="884" y="693.500" font-size="3.500" fill="#888">none</text>
<rect x="1042" y="684" width="96" height="10" fill="#2a2a2a"/>
<text x="1046" y="695" font-size="10" fill="#9a9a9a">1.1.00 / 0:00.000</text>
<text x="1154" y="693.500" font-size="7.500" fill="#9a9a9a">[Stopped]</text>
<text x="1196" y="688.500" font-size="3.500" fill="#888">BPM</text><text x="1196" y="693" font-size="3.500" fill="#888">120</text>
<text x="1214" y="692" font-size="3.500" fill="#888">4/4</text>
<rect x="1228" y="684" width="22" height="5" fill="#262626"/>
<text x="1229" y="688" font-size="3.500" fill="#888">Rate</text>
<rect x="1252" y="690" width="1.500" height="4" fill="#ccc"/><rect x="1255" y="690" width="1.500" height="4" fill="#ccc"/>
<text x="1422" y="693.500" font-size="4.500" fill="#8a8a8a">Selection:</text>
<rect x="1448" y="687" width="38" height="7" fill="#2a2a2a"/><rect x="1487" y="687" width="38" height="7" fill="#2a2a2a"/><rect x="1526" y="687" width="37" height="7" fill="#2a2a2a"/>
<text x="1459" y="693" font-size="5" fill="#aaa">1.1.00</text><text x="1498" y="693" font-size="5" fill="#aaa">1.1.00</text><text x="1537" y="693" font-size="5" fill="#aaa">0.0.00</text>
</g>
<rect x="785" y="694" width="778" height="8" fill="#000"/>

<!-- window divider -->
<rect x="783.200" y="0" width="1.600" height="926" fill="#8f8f8f"/>
<rect x="783.200" y="0" width="1.600" height="34" fill="#555"/>
</svg>
</body></html>
